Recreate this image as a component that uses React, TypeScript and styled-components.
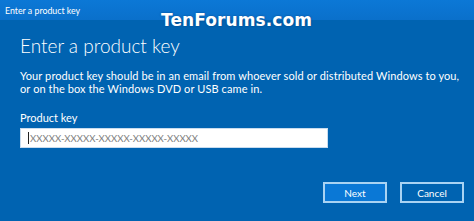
import React from "react";
import styled, { createGlobalStyle } from "styled-components";

const Global = createGlobalStyle`
  html, body { margin: 0; padding: 0; background: #0063b1; }
  * { box-sizing: border-box; }
`;

const Window = styled.div`
  position: relative;
  width: 474px;
  height: 221px;
  background: #0063b1;
  display: flex;
  flex-direction: column;
  font-family: Lato, "Open Sans", sans-serif;
  color: #ffffff;
  overflow: hidden;
`;

const TitleBar = styled.div`
  height: 20px;
  flex: none;
  background: linear-gradient(#0c78d6, #0a70cb);
  display: flex;
  align-items: center;
  padding-left: 5px;
  font-size: 8.8px;
  color: #ffffff;
`;

const Watermark = styled.div`
  position: absolute;
  left: 161px;
  top: 10px;
  font-family: "DejaVu Sans", Verdana, sans-serif;
  font-weight: 700;
  font-size: 17px;
  color: #ffffff;
  text-shadow: 0 0 2px rgba(0, 40, 90, 0.55);
  letter-spacing: 0.1px;
`;

const Body = styled.div`
  flex: 1;
  display: flex;
  flex-direction: column;
  padding: 0 20px;
`;

const Heading = styled.h1`
  margin: 14px 0 0;
  font-size: 19px;
  font-weight: 300;
  line-height: 24px;
`;

const Description = styled.p`
  margin: 11px 0 0;
  font-size: 11px;
  line-height: 13px;
  letter-spacing: 0.1px;
  white-space: nowrap;
`;

const Label = styled.div`
  margin-top: 16px;
  font-size: 11px;
  line-height: 14px;
`;

const Input = styled.div`
  margin-top: 3px;
  width: 308px;
  height: 20px;
  background: #ffffff;
  border: 1px solid #c8dcef;
  display: flex;
  align-items: center;
  padding-left: 7px;
  font-size: 9.6px;
  color: #7d7d7d;
`;

const Caret = styled.span`
  display: inline-block;
  width: 1px;
  height: 12px;
  background: #222;
  margin-right: 1px;
`;

const Actions = styled.div`
  margin-top: auto;
  margin-bottom: 18px;
  display: flex;
  justify-content: flex-end;
  gap: 13px;
  margin-right: -10px;
`;

const Button = styled.button<{ $primary?: boolean }>`
  width: 64px;
  height: 21px;
  padding: 0;
  font-family: inherit;
  font-size: 10px;
  color: #ffffff;
  background: ${(p) => (p.$primary ? "#0a78d6" : "#0063b1")};
  border: 2px solid #a9d3f3;
`;

export default function App() {
  return (
    <>
      <Global />
      <Window>
        <TitleBar>Enter a product key</TitleBar>
        <Watermark>TenForums.com</Watermark>
        <Body>
          <Heading>Enter a product key</Heading>
          <Description>
            Your product key should be in an email from whoever sold or distributed Windows to you,
            <br />
            or on the box the Windows DVD or USB came in.
          </Description>
          <Label>Product key</Label>
          <Input>
            <Caret />
            XXXXX-XXXXX-XXXXX-XXXXX-XXXXX
          </Input>
          <Actions>
            <Button $primary>Next</Button>
            <Button>Cancel</Button>
          </Actions>
        </Body>
      </Window>
    </>
  );
}
